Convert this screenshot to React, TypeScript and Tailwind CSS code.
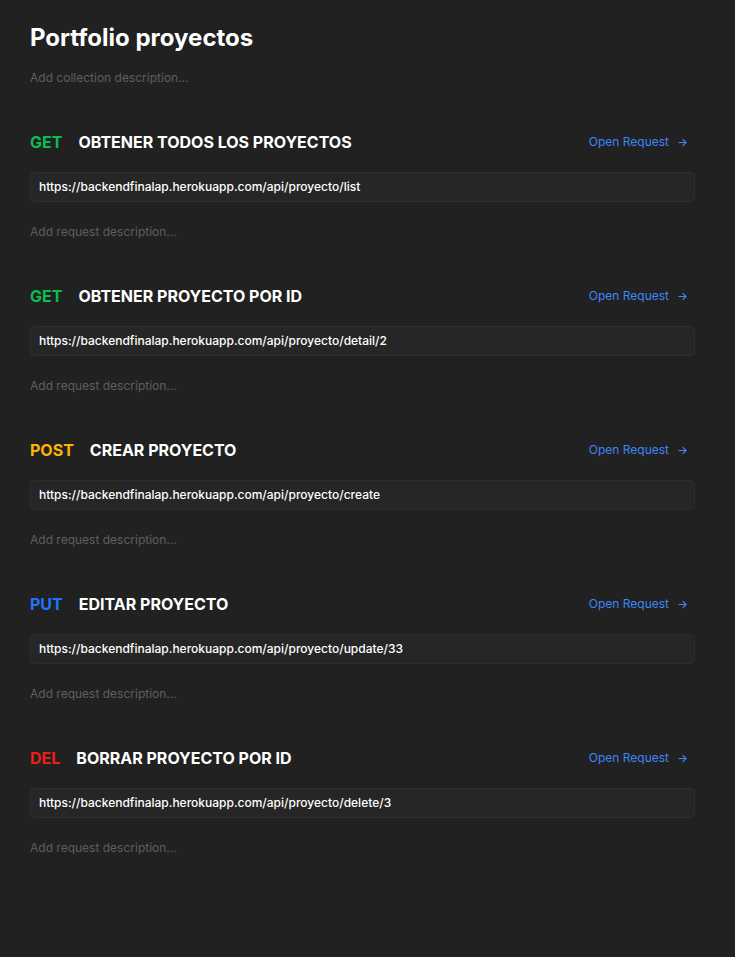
import React from 'react';

const requests = [
  { method: 'GET', color: 'text-[#0cbb52]', name: 'OBTENER TODOS LOS PROYECTOS', url: 'https://backendfinalap.herokuapp.com/api/proyecto/list' },
  { method: 'GET', color: 'text-[#0cbb52]', name: 'OBTENER PROYECTO POR ID', url: 'https://backendfinalap.herokuapp.com/api/proyecto/detail/2' },
  { method: 'POST', color: 'text-[#ffb400]', name: 'CREAR PROYECTO', url: 'https://backendfinalap.herokuapp.com/api/proyecto/create' },
  { method: 'PUT', color: 'text-[#1f74ff]', name: 'EDITAR PROYECTO', url: 'https://backendfinalap.herokuapp.com/api/proyecto/update/33' },
  { method: 'DEL', color: 'text-[#eb2013]', name: 'BORRAR PROYECTO POR ID', url: 'https://backendfinalap.herokuapp.com/api/proyecto/delete/3' },
];

export default function App() {
  return (
    <div className="min-h-screen bg-[#212121] pl-[30px] pr-[40px] pt-[22px] pb-10" style={{ fontFamily: 'Inter, "Noto Sans", sans-serif' }}>
      <h1 className="text-[24px] leading-[32px] font-bold text-white">Portfolio proyectos</h1>
      <p className="mt-[16px] text-[12px] leading-[16px] text-[#5f5f5f]">Add collection description...</p>

      <div className="mt-[46px] flex flex-col gap-[46px]">
        {requests.map((r) => (
          <div key={r.url}>
            {/* header */}
            <div className="flex items-center h-[20px]">
              <span className={`text-[16px] font-bold ${r.color}`}>{r.method}</span>
              <span className="ml-4 text-[16px] font-bold text-white">{r.name}</span>
              <a className="ml-auto mr-[8px] flex items-center gap-[9px] text-[12px] text-[#3d86f7]">
                Open Request
                <svg width="9" height="9" viewBox="0 0 10 10" fill="none" stroke="currentColor" strokeWidth="1.2" strokeLinecap="round" strokeLinejoin="round">
                  <path d="M1 5h8M5.5 1.5 9 5 5.5 8.5" />
                </svg>
              </a>
            </div>
            {/* url */}
            <div className="mt-[20px] h-[30px] rounded-[4px] border border-[#2d2d2d] bg-[#262626] px-[8px] flex items-center">
              <span className="text-[12px] font-medium text-white">{r.url}</span>
            </div>
            <p className="mt-[22px] text-[12px] leading-[16px] text-[#5f5f5f]">Add request description...</p>
          </div>
        ))}
      </div>
    </div>
  );
}
